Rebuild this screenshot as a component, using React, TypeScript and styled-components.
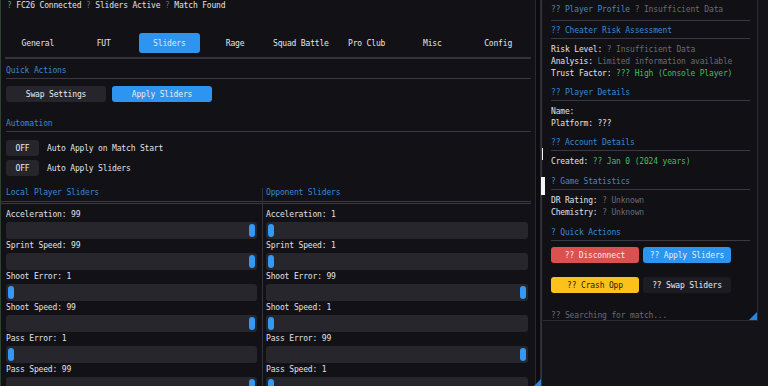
import React from "react";
import styled, { createGlobalStyle } from "styled-components";

const GlobalStyle = createGlobalStyle`
  html, body {
    margin: 0;
    padding: 0;
    background: #131217;
  }
  body {
    font-family: "DejaVu Sans Mono", "Liberation Mono", monospace;
    font-size: 8px;
    letter-spacing: -0.17px;
    color: #e2e2e6;
  }
  * {
    box-sizing: border-box;
  }
`;

const BLUE = "#2d94ef";
const HEADER_BLUE = "#3b89d0";
const MUTED = "#6b6a72";
const GREEN = "#3fbf62";

const Screen = styled.div`
  position: relative;
  display: flex;
  width: 768px;
  height: 386px;
  overflow: hidden;
  background: #131217;
`;

const LeftWindow = styled.div`
  position: relative;
  display: flex;
  width: 541px;
  height: 386px;
  border-left: 1px solid #2b4531;
  background: #121116;
`;

const LeftContent = styled.div`
  flex: 1;
  padding: 0 4px 0 5px;
  overflow: hidden;
`;

const ScrollTrack = styled.div`
  width: 6px;
  background: #0c0c10;
  border-left: 1px solid #2a2930;
  border-right: 1px solid #2a2930;
`;

const Grip = styled.div<{ $size: number }>`
  position: absolute;
  right: 0;
  bottom: 0;
  width: ${(p) => p.$size}px;
  height: ${(p) => p.$size}px;
  background: #2b86d8;
  clip-path: polygon(100% 0, 100% 100%, 0 100%);
`;

const StatusLine = styled.div`
  height: 12px;
  line-height: 12px;
  padding-left: 1px;
  white-space: pre;
`;

const Q = styled.span<{ $c?: string }>`
  color: ${(p) => p.$c || MUTED};
`;

const TabBar = styled.div`
  display: flex;
  height: 20px;
  margin: 21px 0 0 -1px;
`;

const Tab = styled.div<{ $active?: boolean }>`
  flex: 1;
  margin: 0 2px;
  display: flex;
  align-items: center;
  justify-content: center;
  border-radius: 3px;
  background: ${(p) => (p.$active ? BLUE : "transparent")};
  color: #e6e6ea;
`;

const TabRule = styled.div`
  height: 2px;
  margin: 4px 0 0 -1px;
  background: #34333a;
`;

const SectionTitle = styled.div<{ $mt: number }>`
  margin-top: ${(p) => p.$mt}px;
  line-height: 10px;
  height: 10px;
  color: ${HEADER_BLUE};
`;

const Rule = styled.div<{ $mt?: number }>`
  height: 1px;
  margin-top: ${(p) => p.$mt ?? 2}px;
  background: #3a3942;
`;

const ButtonRow = styled.div<{ $mt: number; $gap: number }>`
  display: flex;
  gap: ${(p) => p.$gap}px;
  margin-top: ${(p) => p.$mt}px;
`;

const Button = styled.div<{ $bg: string; $fg?: string; $w: number }>`
  width: ${(p) => p.$w}px;
  height: 16px;
  flex: none;
  display: flex;
  align-items: center;
  justify-content: center;
  border-radius: 3px;
  background: ${(p) => p.$bg};
  color: ${(p) => p.$fg || "#ececf0"};
`;

const ToggleRow = styled.div<{ $mt: number }>`
  display: flex;
  align-items: center;
  gap: 8px;
  margin-top: ${(p) => p.$mt}px;
`;

const Columns = styled.div`
  display: flex;
  margin-top: 12px;
`;

const Column = styled.div<{ $right?: boolean }>`
  width: ${(p) => (p.$right ? "auto" : "256px")};
  flex: ${(p) => (p.$right ? 1 : "none")};
  padding: ${(p) => (p.$right ? "0 3px 0 3px" : "0 5px 0 0")};
  border-left: ${(p) => (p.$right ? "1px solid #34333b" : "none")};
`;

const ColumnTitle = styled.div`
  line-height: 10px;
  height: 10px;
  color: ${HEADER_BLUE};
`;

const DoubleRule = styled.div<{ $right?: boolean }>`
  height: 3px;
  margin: 3px ${(p) => (p.$right ? "-3px" : "-5px")} 0 ${(p) => (p.$right ? "-3px" : "-6px")};
  border-top: 1px solid #3a3942;
  border-bottom: 1px solid #3a3942;
`;

const SliderList = styled.div`
  margin-top: 6px;
`;

const SliderLabel = styled.div`
  line-height: 10px;
  height: 10px;
  margin-bottom: 2px;
`;

const Track = styled.div`
  display: flex;
  align-items: center;
  height: 17px;
  padding: 0 2px;
  margin-bottom: 2px;
  border-radius: 3px;
  background: #27262c;
`;

const GrabArea = styled.div`
  position: relative;
  flex: 1;
  height: 13px;
`;

const Grab = styled.div`
  position: absolute;
  top: 0;
  width: 6px;
  height: 13px;
  border-radius: 3px;
  background: #3499f4;
`;

const RightPanel = styled.div`
  flex: 1;
  display: flex;
  background: #141318;
  border-left: 1px solid #35343b;
`;

const Overlay = styled.div`
  position: relative;
  width: 215px;
  height: 321px;
  margin-left: 1px;
  padding: 4px 7px 0 8px;
  background: #111015;
  border-right: 1px solid #2c2b33;
  border-bottom: 1px solid #2c2b33;
  overflow: hidden;
`;

const Line = styled.div`
  line-height: 12px;
  height: 12px;
  white-space: pre;
`;

const Header = styled.div<{ $mt: number }>`
  margin-top: ${(p) => p.$mt}px;
  line-height: 12px;
  height: 12px;
  color: ${HEADER_BLUE};
  white-space: pre;
`;

const Rows = styled.div`
  margin-top: 5px;
`;

const Key = styled.span`
  color: #e4e4e8;
`;

const Val = styled.span<{ $c: string }>`
  color: ${(p) => p.$c};
`;

const Footer = styled.div`
  margin-top: 17px;
  line-height: 12px;
  color: ${MUTED};
`;

const Cursor = styled.div<{ $x: number; $y: number; $w: number; $h: number }>`
  position: absolute;
  left: ${(p) => p.$x}px;
  top: ${(p) => p.$y}px;
  width: ${(p) => p.$w}px;
  height: ${(p) => p.$h}px;
  background: #f4f4f4;
`;

const tabs = ["General", "FUT", "Sliders", "Rage", "Squad Battle", "Pro Club", "Misc", "Config"];

const sliderNames = ["Acceleration", "Sprint Speed", "Shoot Error", "Shoot Speed", "Pass Error", "Pass Speed"];
const localValues = [99, 99, 1, 99, 1, 99];
const oppValues = [1, 1, 99, 1, 99, 1];

function SliderColumn({ title, values, right }: { title: string; values: number[]; right?: boolean }) {
  return (
    <Column $right={right}>
      <ColumnTitle>{title}</ColumnTitle>
      <DoubleRule $right={right} />
      <SliderList>
        {sliderNames.map((name, i) => {
          const t = (values[i] - 1) / 98;
          return (
            <div key={name}>
              <SliderLabel>
                {name}: {values[i]}
              </SliderLabel>
              <Track>
                <GrabArea>
                  <Grab style={{ left: `calc((100% - 6px) * ${t})` }} />
                </GrabArea>
              </Track>
            </div>
          );
        })}
      </SliderList>
    </Column>
  );
}

export default function App() {
  return (
    <>
      <GlobalStyle />
      <Screen>
        <LeftWindow>
          <LeftContent>
            <StatusLine>
              <Q $c="#6f9a74">?</Q> FC26 Connected <Q>?</Q> Sliders Active <Q>?</Q> Match Found
            </StatusLine>
            <TabBar>
              {tabs.map((t) => (
                <Tab key={t} $active={t === "Sliders"}>
                  {t}
                </Tab>
              ))}
            </TabBar>
            <TabRule />

            <SectionTitle $mt={7}>Quick Actions</SectionTitle>
            <Rule />
            <ButtonRow $mt={7} $gap={6}>
              <Button $bg="#26252b" $w={100}>Swap Settings</Button>
              <Button $bg={BLUE} $w={100}>Apply Sliders</Button>
            </ButtonRow>

            <SectionTitle $mt={17}>Automation</SectionTitle>
            <Rule />
            <ToggleRow $mt={8}>
              <Button $bg="#26252b" $w={33}>OFF</Button>
              <span>Auto Apply on Match Start</span>
            </ToggleRow>
            <ToggleRow $mt={4}>
              <Button $bg="#26252b" $w={33}>OFF</Button>
              <span>Auto Apply Sliders</span>
            </ToggleRow>

            <Columns>
              <SliderColumn title="Local Player Sliders" values={localValues} />
              <SliderColumn title="Opponent Sliders" values={oppValues} right />
            </Columns>
          </LeftContent>
          <ScrollTrack />
          <Grip $size={7} />
        </LeftWindow>

        <RightPanel>
          <Overlay>
            <Line>
              <Val $c={HEADER_BLUE}>?? Player Profile</Val> <Val $c={MUTED}>? Insufficient Data</Val>
            </Line>
            <Rule $mt={4} />

            <Header $mt={4}>?? Cheater Risk Assessment</Header>
            <Rule $mt={1} />
            <Rows>
              <Line>
                <Key>Risk Level:</Key> <Val $c={MUTED}>? Insufficient Data</Val>
              </Line>
              <Line>
                <Key>Analysis:</Key> <Val $c={MUTED}>Limited information available</Val>
              </Line>
              <Line>
                <Key>Trust Factor:</Key> <Val $c={GREEN}>??? High (Console Player)</Val>
              </Line>
            </Rows>

            <Header $mt={7}>?? Player Details</Header>
            <Rule $mt={1} />
            <Rows>
              <Line>Name:</Line>
              <Line>Platform: ???</Line>
            </Rows>

            <Header $mt={7}>?? Account Details</Header>
            <Rule $mt={1} />
            <Rows>
              <Line>
                <Key>Created:</Key> <Val $c={GREEN}>?? Jan 0 (2024 years)</Val>
              </Line>
            </Rows>

            <Header $mt={8}>? Game Statistics</Header>
            <Rule $mt={1} />
            <Rows>
              <Line>
                <Key>DR Rating:</Key> <Val $c={MUTED}>? Unknown</Val>
              </Line>
              <Line>
                <Key>Chemistry:</Key> <Val $c={MUTED}>? Unknown</Val>
              </Line>
            </Rows>

            <Header $mt={8}>? Quick Actions</Header>
            <Rule $mt={1} />
            <ButtonRow $mt={6} $gap={4}>
              <Button $bg="#d9524f" $w={88}>?? Disconnect</Button>
              <Button $bg={BLUE} $w={88}>?? Apply Sliders</Button>
            </ButtonRow>
            <ButtonRow $mt={14} $gap={4}>
              <Button $bg="#fcc21b" $fg="#1b1a16" $w={88}>?? Crash Opp</Button>
              <Button $bg="#1d1c22" $w={88}>?? Swap Sliders</Button>
            </ButtonRow>
            <Footer>?? Searching for match...</Footer>
            <Grip $size={8} />
          </Overlay>
        </RightPanel>

        <Cursor $x={542} $y={148} $w={1} $h={12} />
        <Cursor $x={541} $y={177} $w={4} $h={18} />
      </Screen>
    </>
  );
}
